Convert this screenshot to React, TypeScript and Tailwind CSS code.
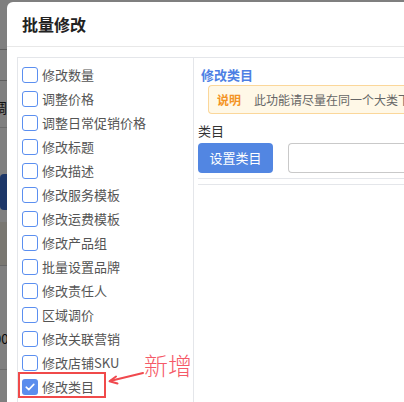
import React from "react";

const items = [
  "修改数量",
  "调整价格",
  "调整日常促销价格",
  "修改标题",
  "修改描述",
  "修改服务模板",
  "修改运费模板",
  "修改产品组",
  "批量设置品牌",
  "修改责任人",
  "区域调价",
  "修改关联营销",
  "修改店铺SKU",
  "修改类目",
];

const font = { fontFamily: '"Noto Sans CJK SC", "Noto Sans", sans-serif' };

function Box({ checked }: { checked?: boolean }) {
  if (checked) {
    return (
      <span className="flex h-[16px] w-[16px] shrink-0 items-center justify-center rounded-[3px] bg-[#5b8ded]">
        <svg width="10" height="8" viewBox="0 0 10 8" fill="none">
          <path d="M1.2 4.2 L3.8 6.6 L8.8 1.4" stroke="white" strokeWidth="1.6" strokeLinecap="round" strokeLinejoin="round" />
        </svg>
      </span>
    );
  }
  return <span className="h-[16px] w-[16px] shrink-0 rounded-[3px] border border-[#5b8ff0] bg-white" />;
}

export default function App() {
  return (
    <div className="relative h-[402px] w-[404px] overflow-hidden bg-white" style={font}>
      {/* underlying page */}
      <div className="flex flex-col">
        <div className="h-[49px]" />
        <div className="h-[32px] border-y border-[#bdbdbd]" />
        <div className="h-[6px]" />
        <div className="flex h-[41px] items-center border-b border-[#d8d8d8] text-[14px] text-[#222]">
          <span className="-ml-[7px]">调</span>
        </div>
        <div className="h-[46px]" />
        <div className="h-[36px] w-[24px] rounded-[4px] bg-[#3a6fd0]" />
        <div className="h-[12px]" />
        <div className="h-[44px] border-b border-[#cfcfcf] bg-[#f2eee2]" />
        <div className="h-[58px]" />
        <div className="flex h-[30px] items-center text-[13px] text-[#111]">
          <span className="-ml-[6px]">00</span>
        </div>
        <div className="h-[16px] border-b border-[#d8d8d8]" />
      </div>
      <div className="absolute inset-0 bg-black/50" />

      {/* modal */}
      <div className="absolute left-[7px] top-[2px] h-[420px] w-[420px] rounded-tl-[6px] bg-white">
        <div className="flex h-[45px] items-center border-b border-[#e8e8e8] pl-[15px] text-[16px] font-bold text-[#222]">
          批量修改
        </div>
        <div className="pl-[10px] pt-[10px]">
          <div className="flex border-l border-t border-[#e4e6ea]">
            {/* left list */}
            <div className="w-[176px] shrink-0 border-r border-[#e4e6ea] pl-[4px] pt-[5px]">
              {items.map((t, i) => {
                const last = i === items.length - 1;
                return (
                  <div key={t} className="relative flex h-[24px] items-center gap-[4px] text-[13px] text-[#555]">
                    <Box checked={last} />
                    <span>{t}</span>
                    {last && (
                      <>
                        <span className="absolute left-[-4px] top-[-3px] h-[26px] w-[88px] border-2 border-[#f04a4a]" />
                        <svg className="absolute left-[84px] top-[-9px]" width="40" height="20" viewBox="0 0 40 20" fill="none">
                          <path d="M4 15 L37 7" stroke="#f0494e" strokeWidth="2" strokeLinecap="round" />
                          <path d="M10 10.5 L3.5 15.2 L11.5 17.5" stroke="#f0494e" strokeWidth="2" strokeLinecap="round" strokeLinejoin="round" />
                        </svg>
                        <span className="absolute left-[122px] top-[-25px] text-[24px] font-light leading-[30px] text-[#f55a68]">
                          新增
                        </span>
                      </>
                    )}
                  </div>
                );
              })}
            </div>
            {/* right panel */}
            <div className="min-w-0 flex-1 overflow-hidden">
              <div className="pl-[7px] pt-[8px] text-[13px] font-bold leading-[17px] text-[#4d7fe4]">修改类目</div>
              <div className="ml-[14px] mt-[2px] flex h-[29px] items-center whitespace-nowrap rounded-l-[4px] border border-r-0 border-[#fbd79a] bg-[#fff8e7] pl-[8px] text-[12px]">
                <span className="font-bold text-[#f39324]">说明</span>
                <svg className="ml-[4px] mr-[9px]" width="5" height="8" viewBox="0 0 5 8">
                  <path d="M0 0 L5 4 L0 8 Z" fill="#f7b06c" />
                </svg>
                <span className="text-[#666]">此功能请尽量在同一个大类下使用</span>
              </div>
              <div className="pl-[4px]">
                <div className="mt-[8px] text-[13px] leading-[17px] text-[#333]">类目</div>
                <div className="mt-[4px] flex gap-[15px]">
                  <div className="flex h-[30px] w-[75px] shrink-0 items-center justify-center rounded-[4px] bg-[#5286e2] text-[13px] text-white">
                    设置类目
                  </div>
                  <div className="h-[30px] flex-1 rounded-l-[4px] border border-r-0 border-[#c9c9c9]" />
                </div>
                <div className="mt-[5px] h-[1px] bg-[#e4e6ea]" />
                <div className="mt-[5px] h-[1px] bg-[#e4e6ea]" />
              </div>
              <div className="h-[300px]" />
            </div>
          </div>
        </div>
      </div>
    </div>
  );
}
